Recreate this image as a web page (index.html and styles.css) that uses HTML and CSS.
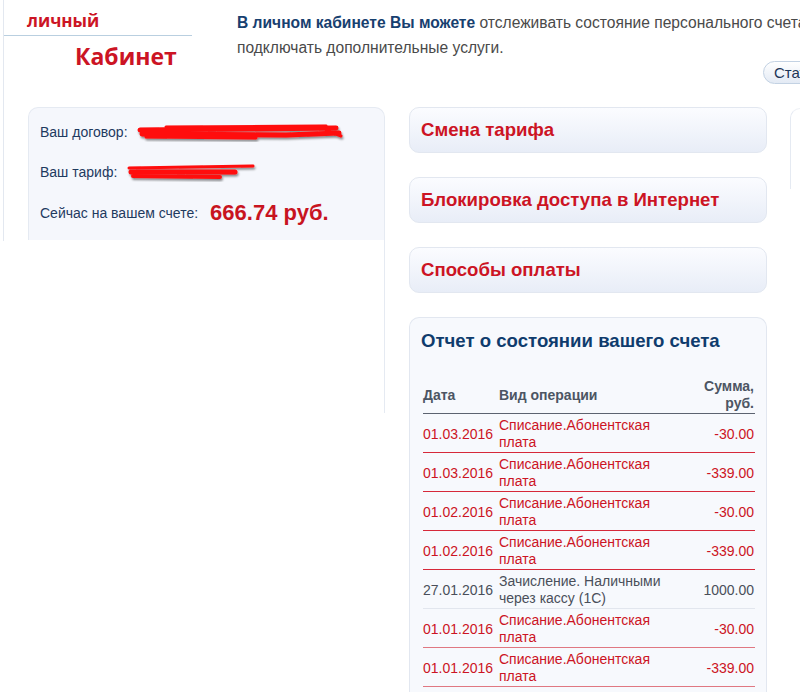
FILE: index.html
```html
<!DOCTYPE html>
<html lang="ru">
<head>
<meta charset="UTF-8" />
<meta name="viewport" content="width=device-width, initial-scale=1.0">
<title>Личный кабинет</title>
<link rel="stylesheet" href="styles.css">
</head>
<body>
<div class="page">
  <div class="header">
    <div class="logo">
      <div class="logo-top">личный</div>
      <div class="logo-bottom">Кабинет</div>
    </div>
    <div class="intro">
      <p><b>В личном кабинете Вы можете</b> отслеживать состояние персонального счета, менять тарифный план и<br>подключать дополнительные услуги.</p>
      <div class="actions"><button class="pill">Статистика</button></div>
    </div>
  </div>

  <div class="main">
    <div class="left-col">
      <div class="account">
        <div class="acc-row">Ваш договор:
          <svg class="redact" width="210" height="20" viewBox="0 0 210 20">
            <defs><filter id="sh" x="-10%" y="-40%" width="120%" height="180%"><feDropShadow dx="1" dy="2" stdDeviation="1.2" flood-color="#000" flood-opacity="0.45"/></filter></defs>
            <g filter="url(#sh)" stroke="#ff0a0a" stroke-linecap="round" fill="none">
              <path d="M4 8 L200 6" stroke-width="5"/>
              <path d="M6 12 L150 13 L203 11" stroke-width="5"/>
              <path d="M30 5 L190 4" stroke-width="3"/>
              <path d="M10 15 L120 16" stroke-width="3"/>
              <path d="M190 8 L205 14" stroke-width="3"/>
            </g>
          </svg>
        </div>
        <div class="acc-row">Ваш тариф:
          <svg class="redact" width="135" height="20" viewBox="0 0 135 20">
            <g filter="url(#sh)" stroke="#ff0a0a" stroke-linecap="round" fill="none">
              <path d="M4 6 L128 4" stroke-width="3"/>
              <path d="M6 10 L110 10" stroke-width="5"/>
              <path d="M8 14 L95 15" stroke-width="4"/>
            </g>
          </svg>
        </div>
        <div class="acc-row balance">Сейчас на вашем счете: <span class="sum">666.74 руб.</span></div>
      </div>
      <div class="account-tail"></div>
    </div>

    <div class="mid-col">
      <div class="menu-item">Смена тарифа</div>
      <div class="menu-item">Блокировка доступа в Интернет</div>
      <div class="menu-item">Способы оплаты</div>

      <div class="report">
        <h2>Отчет о состоянии вашего счета</h2>
        <table class="ops">
          <thead>
            <tr><th class="c-date">Дата</th><th class="c-op">Вид операции</th><th class="c-sum">Сумма,<br>руб.</th></tr>
          </thead>
          <tbody>
            <tr class="minus"><td>01.03.2016</td><td>Списание.Абонентская плата</td><td class="c-sum">-30.00</td></tr>
            <tr class="minus"><td>01.03.2016</td><td>Списание.Абонентская плата</td><td class="c-sum">-339.00</td></tr>
            <tr class="minus"><td>01.02.2016</td><td>Списание.Абонентская плата</td><td class="c-sum">-30.00</td></tr>
            <tr class="minus"><td>01.02.2016</td><td>Списание.Абонентская плата</td><td class="c-sum">-339.00</td></tr>
            <tr class="plus"><td>27.01.2016</td><td>Зачисление. Наличными через кассу (1С)</td><td class="c-sum">1000.00</td></tr>
            <tr class="minus soft"><td>01.01.2016</td><td>Списание.Абонентская плата</td><td class="c-sum">-30.00</td></tr>
            <tr class="minus soft"><td>01.01.2016</td><td>Списание.Абонентская плата</td><td class="c-sum">-339.00</td></tr>
          </tbody>
        </table>
      </div>
    </div>

    <div class="side-col">
      <div class="side-card"></div>
    </div>
  </div>
</div>
</body>
</html>
```

FILE: styles.css
```css
body { margin:0; font-family:"Liberation Sans", Arial, sans-serif; background:#fff; width:800px; height:692px; overflow:hidden; }
.page { width:1000px; position:relative; }
.page::before { content:""; position:absolute; left:3px; top:0; width:1px; height:241px; background:#e3e8f0; }

.header { display:flex; height:107px; }
.logo { width:188px; margin-left:4px; font-family:"Open Sans", "Liberation Sans", sans-serif; font-weight:bold; color:#cc1424; }
.logo-top { box-sizing:border-box; height:36px; border-bottom:1px solid #b9cfe0; padding-left:23px; font-size:17px; line-height:42px; }
.logo-bottom { padding-left:71px; font-size:23px; line-height:40px; }

.intro { margin-left:45px; }
.intro p { margin:0; padding-top:10px; font-size:15.6px; line-height:25px; color:#4a4a4a; white-space:nowrap; }
.intro b { color:#17406f; }
.actions { display:flex; margin-top:1px; }
.pill { margin-left:526px; height:23px; padding:0 10px; border:1px solid #c3d2e3; border-radius:12px; background:linear-gradient(#ffffff,#e3eaf4); font-family:inherit; font-size:15px; color:#1d3656; }

.main { display:flex; align-items:flex-start; padding-left:28px; }
.left-col { width:357px; }
.account { box-sizing:border-box; height:133px; border:1px solid #e5eaf2; border-bottom:none; border-radius:10px 10px 0 0; background:#f5f7fc; padding:14px 11px 12px; }
.acc-row { display:flex; align-items:center; height:20px; margin-bottom:20px; font-size:14px; color:#1e3a5f; }
.acc-row:last-child { margin-bottom:0; }
.redact { margin-left:8px; }
.balance { height:22px; }
.sum { margin-left:12px; font-size:22px; font-weight:bold; color:#c8141f; }
.account-tail { height:173px; border-right:1px solid #e5eaf2; }

.mid-col { width:358px; margin-left:24px; }
.menu-item { box-sizing:border-box; height:46px; margin-bottom:24px; padding-left:11px; border:1px solid #e2e7f0; border-radius:10px; background:linear-gradient(#fbfcff,#e8edf7); font-size:18.6px; font-weight:bold; line-height:44px; color:#cc1424; }
.report { box-sizing:border-box; height:380px; border:1px solid #e2e7f0; border-bottom:none; border-radius:10px 10px 0 0; background:#f7f9fd; padding:13px 14px 0 11px; }
.report h2 { margin:0 0 27px; font-size:18.6px; line-height:20px; color:#0f3c6d; }

.ops { width:332px; margin-left:2px; border-collapse:collapse; font-size:14px; line-height:17px; }
.ops th { text-align:left; vertical-align:middle; padding:0 0 1px; font-weight:bold; color:#4c5563; border-bottom:1px solid #5c6370; }
.ops td { vertical-align:middle; padding:3px 0 1px; }
.ops .c-date { width:76px; }
.ops .c-op { width:170px; }
.ops th.c-sum, .ops td.c-sum { text-align:right; padding-right:1px; }
.minus td { color:#cc1424; border-bottom:1px solid #d6293a; }
.minus.soft td { border-bottom-color:#e07882; }
.plus td { color:#4a4f5a; border-bottom:1px solid #e2e6ee; }

.side-col { margin-left:23px; padding-top:1px; }
.side-card { width:200px; height:80px; border-left:1px solid #e5eaf2; border-top:1px solid #eef1f6; border-radius:10px 0 0 0; }
```
